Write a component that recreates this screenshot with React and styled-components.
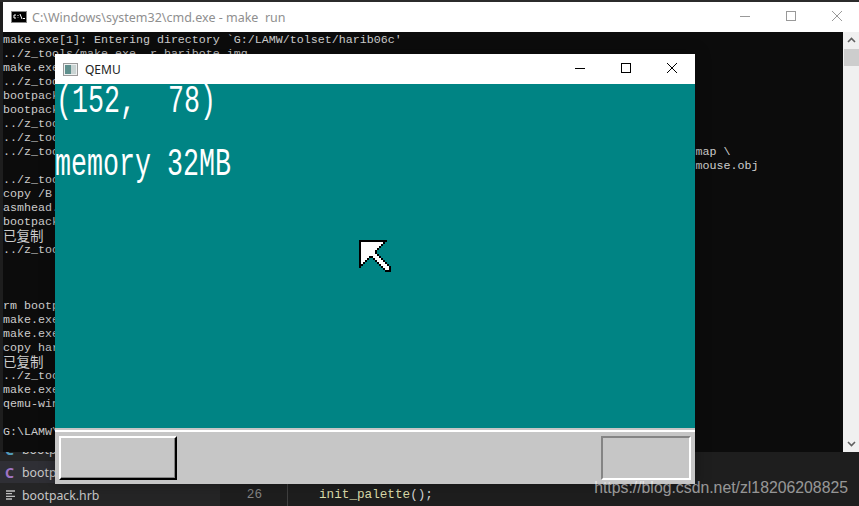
import React from 'react';
import styled, { createGlobalStyle } from 'styled-components';

const GlobalStyle = createGlobalStyle`
    html, body {
        margin: 0;
        padding: 0;
        background: #1e1e1e;
    }
`

const Desktop = styled.div`
    position: relative;
    width: 859px;
    height: 506px;
    overflow: hidden;
    display: flex;
    flex-direction: column;
    background-color: #1e1e1e;
`

const TopEdge = styled.div`
    height: 2px;
    background-color: #2b2b2b;
`

const CmdWindow = styled.div`
    height: 450px;
    margin-left: 3px;
    display: flex;
    flex-direction: column;
`

const TitleBar = styled.div`
    height: 30px;
    flex: none;
    display: flex;
    align-items: center;
    background-color: #fff;
    color: ${props => props.$active ? '#000' : '#999'};
    font-family: "Noto Sans", "Open Sans", sans-serif;
    font-size: ${props => props.$active ? 12 : 12.5}px;
    white-space: pre;
`

const TitleIcon = styled.svg`
    flex: none;
    display: block;
    margin: 0 ${props => props.$gap}px 0 ${props => props.$left}px;
`

const TitleText = styled.span`
    color: ${props => props.$active ? '#222' : '#8f8f8f'};
`

const Controls = styled.div`
    margin-left: auto;
    margin-right: ${props => props.$inset}px;
    display: flex;
`

const ControlButton = styled.div`
    width: 46px;
    height: 30px;
    padding-bottom: 2px;
    box-sizing: border-box;
    display: flex;
    align-items: center;
    justify-content: center;
`

const CmdBody = styled.div`
    flex: 1;
    min-height: 0;
    display: flex;
`

const Console = styled.div`
    flex: 1;
    min-width: 0;
    padding-top: 1px;
    overflow: hidden;
    background-color: #0c0c0c;
    color: #cccccc;
    font-family: "Liberation Mono", "Noto Sans CJK SC", monospace;
    font-size: 11.67px;
    line-height: 14px;
`

const ConsoleLine = styled.div`
    height: 14px;
    white-space: pre;
`

const CjkLine = styled(ConsoleLine)`
    font-family: "Noto Sans CJK SC", sans-serif;
    font-size: 13.5px;
    line-height: 13px;
`

const ScrollBar = styled.div`
    width: 16px;
    flex: none;
    display: flex;
    flex-direction: column;
    align-items: center;
    background-color: #f0f0f0;
`

const ScrollArrow = styled.svg`
    display: block;
    flex: none;
    margin: 5px 0;
`

const ScrollThumb = styled.div`
    align-self: stretch;
    margin: 1px 0 0 1px;
    height: 17px;
    background-color: #cdcdcd;
`

const ScrollTrack = styled.div`
    flex: 1;
`

const Editor = styled.div`
    flex: 1;
    min-height: 0;
    display: flex;
`

const Sidebar = styled.div`
    width: 220px;
    flex: none;
    display: flex;
    flex-direction: column;
    justify-content: flex-end;
    overflow: hidden;
    background-color: #252526;
`

const FileRow = styled.div`
    height: 22px;
    flex: none;
    margin-bottom: ${props => props.$gap ? 1 : 0}px;
    padding-left: 5px;
    display: flex;
    align-items: center;
    background-color: ${props => props.$selected ? '#2f2f35' : 'transparent'};
    color: #c8c8c8;
    font-family: "Noto Sans", "Open Sans", sans-serif;
    font-size: 12.3px;
`

const FileIcon = styled.span`
    width: 17px;
    flex: none;
    display: flex;
    align-items: center;
    color: ${props => props.$color};
    font-weight: 700;
    font-size: 14px;
`

const Gutter = styled.div`
    width: 68px;
    flex: none;
    padding: 33px 25px 0 0;
    box-sizing: border-box;
    border-right: 1px solid #404040;
    text-align: right;
    color: #858585;
    font-family: "Liberation Mono", monospace;
    font-size: 12.67px;
    line-height: 20px;
`

const Code = styled.div`
    flex: 1;
    padding: 33px 0 0 31px;
    color: #d4d4d4;
    font-family: "Liberation Mono", monospace;
    font-size: 12.67px;
    line-height: 20px;
`

const FunctionName = styled.span`
    color: #dcdcaa;
`

const QemuWindow = styled.div`
    position: absolute;
    left: 55px;
    top: 54px;
    width: 640px;
    height: 430px;
    display: flex;
    flex-direction: column;
    box-shadow: 0 0 14px rgba(0, 0, 0, 0.35);
`

const Screen = styled.div`
    position: relative;
    flex: 1;
    min-height: 0;
    overflow: hidden;
    padding-top: 6px;
    display: flex;
    flex-direction: column;
    background-color: #008484;
`

const ScreenText = styled.div`
    height: ${props => props.$height}px;
    flex: none;
    padding-left: ${props => props.$left}px;
    color: #fff;
    font-family: "Liberation Mono", monospace;
    font-size: 26.67px;
    line-height: 30px;
    white-space: pre;
    transform: scaleY(1.42);
    transform-origin: 0 22px;
`

const MouseCursor = styled.svg`
    position: absolute;
    left: 304px;
    top: 156px;
    display: block;
`

const TaskBar = styled.div`
    height: 56px;
    flex: none;
    box-sizing: border-box;
    border-top: 2px solid #c6c6c6;
    display: flex;
    flex-direction: column;
    background-color: #c6c6c6;
`

const TaskBarHighlight = styled.div`
    height: 2px;
    flex: none;
    background-color: #fff;
`

const TaskBarRow = styled.div`
    flex: 1;
    padding: 4px;
    display: flex;
    justify-content: space-between;
`

const StartButton = styled.div`
    width: 118px;
    box-sizing: border-box;
    border-style: solid;
    border-width: 2px;
    border-color: #fff #000 #000 #fff;
    box-shadow: inset -1px -1px 0 #848484;
    background-color: #c6c6c6;
`

const StatusBox = styled.div`
    width: 90px;
    box-sizing: border-box;
    border-style: solid;
    border-width: 2px;
    border-color: #848484 #fff #fff #848484;
    background-color: #c6c6c6;
`

const Watermark = styled.div`
    position: absolute;
    right: 11px;
    bottom: 10px;
    color: rgba(255, 255, 255, 0.55);
    font-family: "Liberation Sans", Arial, sans-serif;
    font-size: 15.8px;
    line-height: 17px;
    white-space: nowrap;
`

const consoleLines = [
    "make.exe[1]: Entering directory `G:/LAMW/tolset/harib06c'",
    "../z_tools/make.exe -r haribote.img",
    "make.exe[2]: Entering directory",
    "../z_tools/nask.exe ipl10.nas",
    "bootpack.gas",
    "bootpack.nas",
    "../z_tools/cc1.exe",
    "../z_tools/gas2nask.exe",
    "../z_tools/obj2bim.exe @../z_tools/haribote/haribote.rul out:bootpack.bim stack:3136k".padEnd(99) + "map \\",
    "            bootpack.obj naskfunc.obj hankaku.obj graphic.obj dsctbl.obj int.obj fifo.obj".padEnd(99) + "mouse.obj",
    "../z_tools/bim2hrb.exe",
    "copy /B asmhead.bin+bootpack.hrb",
    "asmhead.bin",
    "bootpack.hrb",
    { cjk: "已复制" },
    "../z_tools/edimg.exe",
    "",
    "",
    "",
    "rm bootpack.obj",
    "make.exe[2]: Leaving directory",
    "make.exe[1]: Leaving directory",
    "copy haribote.img",
    { cjk: "已复制" },
    "../z_tools/make.exe",
    "make.exe[1]: Entering directory",
    "qemu-win.bat",
    "",
    "G:\\LAMW\\tolset\\harib06c>",
]

const cursorPattern = [
    "**************..",
    "*OOOOOOOOOOO*...",
    "*OOOOOOOOOO*....",
    "*OOOOOOOOO*.....",
    "*OOOOOOOO*......",
    "*OOOOOOO*.......",
    "*OOOOOOO*.......",
    "*OOOOOOOO*......",
    "*OOOO**OOO*.....",
    "*OOO*..*OOO*....",
    "*OO*....*OOO*...",
    "*O*......*OOO*..",
    "**........*OOO*.",
    "*..........*OOO*",
    "............*OO*",
    ".............***",
]

const WindowControls = ({ inset }) => (
    <Controls $inset={inset}>
        <ControlButton>
            <svg width="10" height="10" viewBox="0 0 10 10"><path d="M0 5.5H10" stroke="currentColor" fill="none" /></svg>
        </ControlButton>
        <ControlButton>
            <svg width="10" height="10" viewBox="0 0 10 10"><rect x=".5" y=".5" width="9" height="9" stroke="currentColor" fill="none" /></svg>
        </ControlButton>
        <ControlButton>
            <svg width="10" height="10" viewBox="0 0 10 10"><path d="M0 0L10 10M10 0L0 10" stroke="currentColor" fill="none" /></svg>
        </ControlButton>
    </Controls>
)

const App = () => {
    return (
        <Desktop>
            <GlobalStyle />
            <TopEdge />

            <CmdWindow>
                <TitleBar>
                    <TitleIcon $left={8} $gap={5} width="16" height="12" viewBox="0 0 16 12">
                        <rect x=".5" y=".5" width="15" height="11" fill="#000" stroke="#888" />
                        <path d="M3 4H5M3 4V7H5M7 4V5M7 6.5V7M9 3L11 8M12 7.5H14" stroke="#fff" fill="none" />
                    </TitleIcon>
                    <TitleText>C:\Windows\system32\cmd.exe - make  run</TitleText>
                    <WindowControls inset={-1} />
                </TitleBar>
                <CmdBody>
                    <Console>
                        {consoleLines.map((line, i) => (
                            line.cjk
                                ? <CjkLine key={i}>{line.cjk}</CjkLine>
                                : <ConsoleLine key={i}>{line}</ConsoleLine>
                        ))}
                    </Console>
                    <ScrollBar>
                        <ScrollArrow width="9" height="6" viewBox="0 0 9 6">
                            <path d="M1 5L4.5 1.5L8 5" stroke="#606060" strokeWidth="1.6" fill="none" />
                        </ScrollArrow>
                        <ScrollThumb />
                        <ScrollTrack />
                        <ScrollArrow width="9" height="6" viewBox="0 0 9 6">
                            <path d="M1 1L4.5 4.5L8 1" stroke="#606060" strokeWidth="1.6" fill="none" />
                        </ScrollArrow>
                    </ScrollBar>
                </CmdBody>
            </CmdWindow>

            <Editor>
                <Sidebar>
                    <FileRow $gap>
                        <FileIcon $color="#519aba">C</FileIcon>
                        bootpack.c
                    </FileRow>
                    <FileRow $selected $gap>
                        <FileIcon $color="#a074c4">C</FileIcon>
                        bootpack.h
                    </FileRow>
                    <FileRow>
                        <FileIcon $color="#c0c0c0">
                            <svg width="11" height="10" viewBox="0 0 11 10">
                                <path d="M1 1H10M1 3.7H7M1 6.3H10M1 9H7" stroke="currentColor" strokeWidth="1.3" fill="none" />
                            </svg>
                        </FileIcon>
                        bootpack.hrb
                    </FileRow>
                </Sidebar>
                <Gutter>26</Gutter>
                <Code><FunctionName>init_palette</FunctionName>();</Code>
            </Editor>

            <QemuWindow>
                <TitleBar $active>
                    <TitleIcon $left={8} $gap={7} width="15" height="13" viewBox="0 0 15 13">
                        <rect x=".5" y=".5" width="14" height="12" fill="#eef0f0" stroke="#9a9a9a" />
                        <rect x="2" y="2" width="6" height="9" fill="#5f8f8c" />
                        <rect x="8" y="2" width="5" height="9" fill="#c9d4d3" />
                    </TitleIcon>
                    <TitleText $active>QEMU</TitleText>
                    <WindowControls inset={0} />
                </TitleBar>
                <Screen>
                    <ScreenText $left={1} $height={63}>(152,  78)</ScreenText>
                    <ScreenText $left={0} $height={30}>memory 32MB</ScreenText>
                    <MouseCursor width="32" height="32" viewBox="0 0 16 16" shapeRendering="crispEdges">
                        {cursorPattern.map((row, y) => row.split('').map((c, x) => (
                            c === '.' ? null : <rect key={`${x}-${y}`} x={x} y={y} width="1" height="1" fill={c === '*' ? '#000' : '#fff'} />
                        )))}
                    </MouseCursor>
                </Screen>
                <TaskBar>
                    <TaskBarHighlight />
                    <TaskBarRow>
                        <StartButton />
                        <StatusBox />
                    </TaskBarRow>
                </TaskBar>
            </QemuWindow>

            <Watermark>https://blog.csdn.net/zl18206208825</Watermark>
        </Desktop>
    )
}

export default App;
